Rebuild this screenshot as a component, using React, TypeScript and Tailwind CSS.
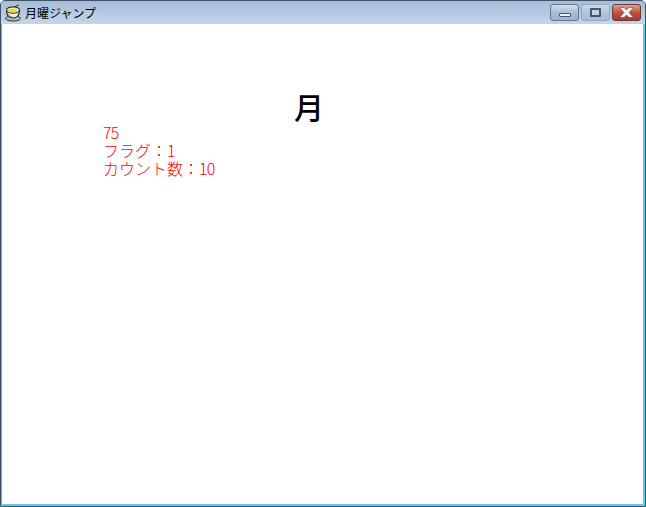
const digits = "tracking-[-0.9px]";

function TitleIcon() {
  return (
    <svg width="18" height="18" viewBox="0 0 18 18" className="shrink-0">
      {/* saucer */}
      <ellipse cx="9" cy="14.5" rx="7.5" ry="2.5" fill="#bdbdb6" stroke="#2b2b2b" strokeWidth="1" />
      {/* cup */}
      <path d="M2.5 6 C2.5 10.5 4.5 14 9 14 C13.5 14 15.5 10.5 15.5 6" fill="#f2f2ec" stroke="#2b2b2b" strokeWidth="1.2" />
      <ellipse cx="9" cy="6" rx="6.5" ry="3.2" fill="#f4f4ee" stroke="#2b2b2b" strokeWidth="1.2" />
      <ellipse cx="8.5" cy="6.5" rx="4.8" ry="2" fill="#ece02a" />
      <path d="M4 10 C5 12 7 13 9 13" stroke="#8a8a84" strokeWidth="1" fill="none" />
      <path d="M11 2.5 L15 1" stroke="#2b2b2b" strokeWidth="1" />
    </svg>
  );
}

function WindowButtons() {
  return (
    <div className="flex items-center gap-[2px] h-[17px]">
      <button className="w-[29px] h-[17px] rounded-[3px] border border-[#5f7590] bg-gradient-to-b from-[#d3dfee] via-[#a9bdd6] to-[#9db3cf] flex items-center justify-center">
        <span className="block w-[12px] h-[4px] bg-[#eef2f7] border border-[#46556b] rounded-[1px] mt-[4px]" />
      </button>
      <button className="w-[29px] h-[17px] rounded-[3px] border border-[#93a9c4] bg-gradient-to-b from-[#c9d8e9] via-[#b3c6dc] to-[#a8bdd6] flex items-center justify-center">
        <span className="block w-[11px] h-[9px] bg-[#c4d2e2] border-2 border-[#46556b] rounded-[1px]" />
      </button>
      <button className="w-[29px] h-[17px] rounded-[3px] border border-[#6d3a36] bg-gradient-to-b from-[#dfa094] via-[#c4503f] to-[#a83a2e] flex items-center justify-center">
        <svg width="17" height="11" viewBox="0 0 17 11">
          <path d="M1.5 0.5 H6 L8.5 3 L11 0.5 H15.5 L11 5.5 L15.5 10.5 H11 L8.5 8 L6 10.5 H1.5 L6 5.5 Z" fill="#f8f6f5" stroke="#5a2a26" strokeWidth="0.5" />
        </svg>
      </button>
    </div>
  );
}

export default function App() {
  return (
    <div className="w-[646px] h-[507px] flex flex-col overflow-hidden rounded-t-[5px] border border-[#3e5268] bg-[#5ecbf2]">
      <div className="h-[23px] flex items-center justify-between pl-[3px] pr-[4px] bg-gradient-to-b from-[#a6bcd9] to-[#c3d6e9]">
        <div className="flex items-center gap-[3px]">
          <TitleIcon />
          <span className="text-[12px] text-black font-['Noto_Sans_CJK_JP',sans-serif]">月曜ジャンプ</span>
        </div>
        <WindowButtons />
      </div>
      <div className="flex-1 border-l border-l-[#6aa5d8] mr-[2px] mb-[2px] bg-white font-['Noto_Sans_CJK_JP',sans-serif]">
        <div className="pl-[292px] pt-[64px] h-[101px]">
          <div className="text-[30px] leading-[36px] font-medium text-black">月</div>
        </div>
        <div className="pl-[101px] -mt-[2px] text-[16px] leading-[18px] font-light text-[#ff0000]">
          <div className={digits}>75</div>
          <div>フラグ：<span className={digits}>1</span></div>
          <div>カウント数：<span className={digits}>10</span></div>
        </div>
      </div>
    </div>
  );
}
